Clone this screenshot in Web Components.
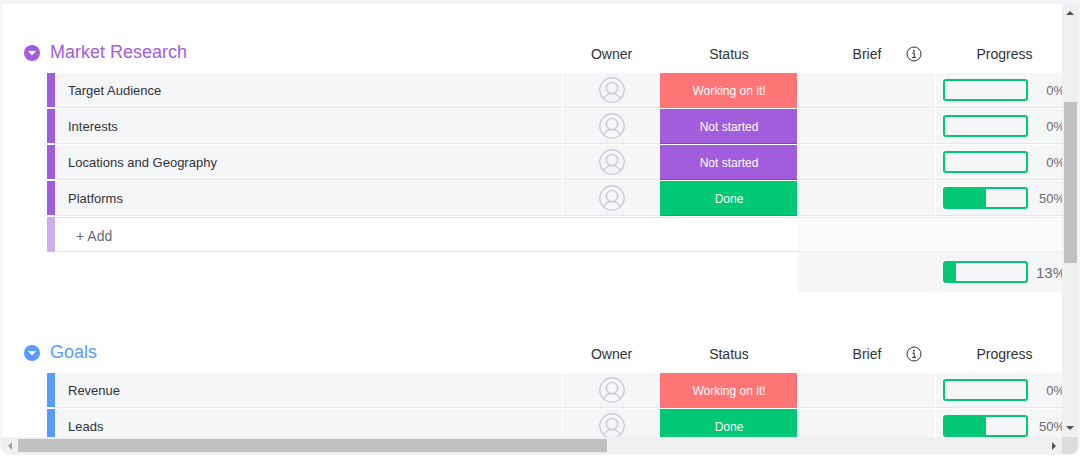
<!DOCTYPE html>
<html lang="en">
<head>
<meta charset="utf-8">
<title>Board</title>
<style>
  html, body { margin: 0; height: 100%; background: #fff; }
  body { font-family: "Liberation Sans", Arial, sans-serif; color: #323338; overflow: hidden; }
</style>
</head>
<body>
<board-panel>
  <board-group name="Market Research" color="#a25ddc" summary="13">
    <board-item name="Target Audience" status="working" progress="0"></board-item>
    <board-item name="Interests" status="idle" progress="0"></board-item>
    <board-item name="Locations and Geography" status="idle" progress="0"></board-item>
    <board-item name="Platforms" status="done" progress="50"></board-item>
  </board-group>
  <board-group name="Goals" color="#579bfc">
    <board-item name="Revenue" status="working" progress="0"></board-item>
    <board-item name="Leads" status="done" progress="50"></board-item>
  </board-group>
</board-panel>

<script>
class BoardPanel extends HTMLElement {
  constructor() {
    super();
    this.attachShadow({ mode: "open" }).innerHTML = `
      <style>
        :host { display: flex; flex-direction: column; box-sizing: border-box; height: calc(100vh - 2px);
          padding: 4px 2px 1px; background: #f3f4f8; border-radius: 0 0 10px 10px; }
        .frame { flex: 1; min-height: 0; display: grid; grid-template: minmax(0, 1fr) 17px / minmax(0, 1fr) 16px;
          overflow: hidden; border-radius: 0 0 8px 8px; }
        .view { box-sizing: border-box; overflow: hidden; background: #fff; padding-top: 28px;
          display: flex; flex-direction: column; gap: 40px; }
        .corner { background: #dcdcdc; }
      </style>
      <div class="frame">
        <div class="view"><slot></slot></div>
        <scroll-rail direction="vertical"></scroll-rail>
        <scroll-rail direction="horizontal"></scroll-rail>
        <div class="corner"></div>
      </div>`;
  }
}

class ScrollRail extends HTMLElement {
  connectedCallback() {
    const v = this.getAttribute("direction") === "vertical";
    this.attachShadow({ mode: "open" }).innerHTML = `
      <style>
        :host { display: flex; flex-direction: ${v ? "column" : "row"}; background: #f0f0f0; }
        button { flex: none; border: 0; padding: 0; background: none; width: 16px; height: 17px;
          display: flex; align-items: center; justify-content: center; color: #505050; }
        button.off { color: #a3a3a3; }
        svg { display: block; fill: currentColor; }
        .track { flex: 1; min-height: 0; display: flex; flex-direction: ${v ? "column" : "row"};
          padding: ${v ? "0 1px 0 2px" : "2px 0"}; }
        .thumb { background: #c1c1c1; }
        .before { flex: ${v ? "81" : "0"} 0 0; }
        .thumb { flex: ${v ? "161" : "589"} 0 0; }
        .after { flex: ${v ? "157" : "439"} 0 0; }
      </style>
      <button type="button" class="${v ? "" : "off"}" aria-label="Scroll ${v ? "up" : "left"}">
        <svg width="8" height="8" viewBox="0 0 8 8"><path d="${v ? "M0 6 L4 2 L8 6Z" : "M6 0 L2 4 L6 8Z"}"/></svg></button>
      <div class="track"><div class="before"></div><div class="thumb"></div><div class="after"></div></div>
      <button type="button" aria-label="Scroll ${v ? "down" : "right"}">
        <svg width="8" height="8" viewBox="0 0 8 8"><path d="${v ? "M0 1 L4 5 L8 1Z" : "M2 0 L6 4 L2 8Z"}"/></svg></button>`;
  }
}

class StatusLabel extends HTMLElement {
  connectedCallback() {
    const [color, edge] = {
      working: ["#ff7575", "#ff7575"], idle: ["#a25ddc", "#8a3fc4"], done: ["#00c875", "#00b368"]
    }[this.getAttribute("kind")];
    this.attachShadow({ mode: "open" }).innerHTML = `
      <style>
        :host { display: flex; align-items: center; justify-content: center; height: 35px; box-sizing: border-box;
          padding: 1px 0 0 1px; background: ${color}; border-bottom: 1px solid ${edge};
          color: #fff; font-size: 12px; }
      </style><slot></slot>`;
  }
}

class PersonIcon extends HTMLElement {
  connectedCallback() {
    this.attachShadow({ mode: "open" }).innerHTML = `
      <style>
        :host { display: flex; justify-content: center; padding-left: 2px; }
        svg { display: block; fill: none; stroke: #c9cad6; stroke-width: 1.4; }
      </style>
      <svg width="26" height="26" viewBox="0 0 26 26" role="img" aria-label="Unassigned">
        <circle cx="13" cy="13" r="12.2"/><circle cx="13" cy="11" r="5.6"/>
        <path d="M4.7 21.8 C6 18.4 9 16.6 13 16.6 C17 16.6 20 18.4 21.3 21.8"/>
      </svg>`;
  }
}

class ProgressMeter extends HTMLElement {
  connectedCallback() {
    const value = this.getAttribute("value");
    this.attachShadow({ mode: "open" }).innerHTML = `
      <style>
        :host { display: flex; align-items: center; justify-content: space-between; padding: 0 7px;
          color: #6a6a70; font-size: 13px; }
        :host([total]) { font-size: 15px; }
        .bar { box-sizing: border-box; width: 85px; height: 22px; border: 2px solid #00c875; border-radius: 3px; }
        .fill { height: 100%; width: ${value}%; background: #00c875; }
      </style>
      <div class="bar"><div class="fill"></div></div><span>${value}%</span>`;
  }
}

class BoardItem extends HTMLElement {}

class BoardGroup extends HTMLElement {
  connectedCallback() {
    const words = { working: "Working on it!", idle: "Not started", done: "Done" };
    const name = this.getAttribute("name");
    const rows = [...this.querySelectorAll("board-item")].map(item => {
      const s = item.getAttribute("status");
      return `<tr class="item"><td class="gutter"></td><td class="stripe"></td>
        <td class="name">${item.getAttribute("name")}</td>
        <td class="widget"><person-icon></person-icon></td>
        <td class="status"><status-label kind="${s}">${words[s]}</status-label></td>
        <td></td>
        <td class="widget"><progress-meter value="${item.getAttribute("progress")}"></progress-meter></td></tr>`;
    }).join("");
    const summary = this.getAttribute("summary");
    this.attachShadow({ mode: "open" }).innerHTML = `
      <style>
        :host { display: block; flex: none; margin-left: 22px; margin-right: -11px; --accent: ${this.getAttribute("color")}; }
        table { width: 100%; table-layout: fixed; border-collapse: separate; border-spacing: 0; }
        th, td { box-sizing: border-box; padding: 0; }
        .c-gutter { width: 23px; } .c-stripe { width: 8px; } .c-owner { width: 97px; }
        .c-wide { width: 138px; } .c-last { width: 137px; }
        thead th { height: 41px; font-size: 14px; font-weight: 400; padding-top: 3px; text-align: center; }
        thead th.lead, thead th.title { padding-top: 0; text-align: left; }
        thead th.title { padding-left: 3px; font-size: 18px; color: var(--accent); }
        .lead button { display: block; border: 0; padding: 0; background: none; }
        svg { display: block; }
        .brief { display: grid; grid-template-columns: 1fr auto 1fr; align-items: center; }
        .brief span { grid-column: 2; }
        .brief svg { justify-self: end; margin-right: 14px; }
        .item td { height: 36px; background: #f5f6f8; border-right: 1px solid #fff; border-bottom: 1px solid #fff;
          box-shadow: inset 0 -1px #e4e6eb; background-clip: padding-box; }
        .item td.gutter, .item td.status { background: none; box-shadow: none; }
        .item td.stripe { background: var(--accent); background-clip: padding-box; box-shadow: none; border-right: 0; border-bottom: 2px solid #fff; }
        .item td.name { padding-left: 13px; font-size: 13px; }
        .item td.widget { padding-bottom: 1px; }
        .add td { height: 35px; border-top: 1px solid #e4e6eb; border-bottom: 1px solid #e4e6eb; }
        .add td.gutter { border: 0; }
        .add td.stripe { border: 0; background: var(--accent); opacity: .5; }
        .add td.calc { background: #fafbfd; border-color: #eceef2; }
        .add button { display: block; border: 0; padding: 3px 0 0 21px; background: none; font: inherit; font-size: 14px; color: #676879; }
        .sum td { height: 40px; }
        .sum .calc { background: #f5f6f8; border-radius: 0 0 4px 4px; }
      </style>
      <table aria-label="${name}">
        <colgroup><col class="c-gutter"><col class="c-stripe"><col><col class="c-owner"><col class="c-wide"><col class="c-wide"><col class="c-last"></colgroup>
        <thead><tr>
          <th class="lead"><button type="button" aria-label="Collapse ${name}">
            <svg width="16" height="16" viewBox="0 0 16 16"><circle cx="8" cy="8" r="8" fill="var(--accent)"/><path d="M4.4 6.4 H11.6 L8 10Z" fill="#fff" stroke="#fff" stroke-width=".8" stroke-linejoin="round"/></svg></button></th>
          <th class="title" colspan="2">${name}</th>
          <th>Owner</th><th>Status</th>
          <th><div class="brief"><span>Brief</span><svg width="16" height="16" viewBox="0 0 16 16" role="img" aria-label="Info"><circle cx="8" cy="8" r="7" fill="none" stroke="#323338" stroke-width="1"/><path d="M6.4 7 H8.2 V11.4 M6.2 11.5 H10" fill="none" stroke="#323338" stroke-width="1.1"/><circle cx="8" cy="4.7" r=".9" fill="#323338"/></svg></div></th>
          <th>Progress</th>
        </tr></thead>
        <tbody>${rows}
          ${summary ? `<tr class="add"><td class="gutter"></td><td class="stripe"></td>
            <td colspan="3"><button type="button">+ Add</button></td><td class="calc"></td><td class="calc"></td></tr>
          <tr class="sum"><td colspan="5"></td><td class="calc"></td><td class="calc"><progress-meter total value="${summary}"></progress-meter></td></tr>` : ""}
        </tbody>
      </table>`;
  }
}

customElements.define("board-item", BoardItem);
customElements.define("person-icon", PersonIcon);
customElements.define("status-label", StatusLabel);
customElements.define("progress-meter", ProgressMeter);
customElements.define("scroll-rail", ScrollRail);
customElements.define("board-group", BoardGroup);
customElements.define("board-panel", BoardPanel);
</script>
</body>
</html>
